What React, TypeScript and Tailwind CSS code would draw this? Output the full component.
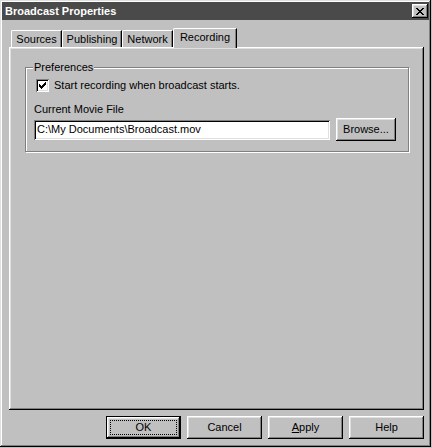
import React from "react";

const raised =
  "shadow-[inset_-1px_-1px_#000,inset_1px_1px_#fff,inset_-2px_-2px_#808080,inset_2px_2px_#dfdfdf]";
const sunken =
  "shadow-[inset_1px_1px_#808080,inset_-1px_-1px_#fff,inset_2px_2px_#000,inset_-2px_-2px_#dfdfdf]";

function Tab({ label, w, selected }: { label: string; w: number; selected?: boolean }) {
  if (selected) {
    return (
      <div
        className="relative z-10 -mx-[2px] -mb-[1px] h-[20px] w-[64px] rounded-tl-[2px] border-l border-t border-white bg-[#c0c0c0] border-r border-r-black shadow-[inset_-1px_0_#808080] flex justify-center pt-[2px]"
      >
        <span className="leading-[13px]">{label}</span>
      </div>
    );
  }
  return (
    <div
      style={{ width: w }}
      className="h-[17px] rounded-tl-[2px] border-l border-t border-white border-r border-r-black shadow-[inset_-1px_0_#808080] flex justify-center pt-[2px]"
    >
      <span className="leading-[13px]">{label}</span>
    </div>
  );
}

function Button({ children, def }: { children: React.ReactNode; def?: boolean }) {
  if (def) {
    return (
      <div className="w-[75px] h-[23px] border border-black">
        <div className={`w-full h-full ${raised} p-[3px]`}>
          <div className="w-full h-full border border-dotted border-black flex items-center justify-center leading-[13px]">
            {children}
          </div>
        </div>
      </div>
    );
  }
  return (
    <div className={`w-[75px] h-[23px] ${raised} flex items-center justify-center leading-[13px]`}>
      {children}
    </div>
  );
}

export default function App() {
  return (
    <div
      className="w-[432px] h-[448px] bg-[#c0c0c0] text-[11px] text-black"
      style={{ fontFamily: '"Liberation Sans", Arial, sans-serif' }}
    >
      <div className="w-[431px] h-[447px] p-[2px] shadow-[inset_-1px_-1px_#000,inset_1px_1px_#dfdfdf,inset_-2px_-2px_#808080,inset_2px_2px_#fff] flex flex-col">
        {/* Title bar */}
        <div className="h-[18px] bg-[#4a4a4a] flex items-center justify-between pl-[3px] pr-[1px]">
          <span className="text-white font-bold text-[11px] leading-[13px]">Broadcast Properties</span>
          <div className={`w-[16px] h-[14px] bg-[#c0c0c0] ${raised} flex items-center justify-center`}>
            <svg width="8" height="7" viewBox="0 0 8 7" shapeRendering="crispEdges">
              <path
                d="M0 0h2v1h1v1h2V1h1V0h2v1H7v1H6v1H5v1h1v1h1v1h1v1H6V6H5V5H3v1H2v1H0V6h1V5h1V4h1V3H2V2H1V1H0z"
                fill="#000"
              />
            </svg>
          </div>
        </div>

        {/* Tabs */}
        <div className="mt-[8px] ml-[9px] h-[19px] flex items-end">
          <Tab label="Sources" w={51} />
          <Tab label="Publishing" w={60} />
          <Tab label="Network" w={51} />
          <div className="w-[2px]" />
          <Tab label="Recording" w={60} selected />
        </div>

        {/* Panel */}
        <div className="ml-[7px] w-[415px] h-[363px] shadow-[inset_-1px_-1px_#000,inset_1px_1px_#fff,inset_-2px_-2px_#808080,inset_2px_2px_#dfdfdf] pt-[20px] pl-[16px]">
          <div className="relative w-[384px] h-[85px] border border-[#808080] shadow-[inset_1px_1px_#fff,1px_1px_#fff] pt-[11px] pl-[8px]">
            <span className="absolute -top-[7px] left-[7px] px-[1px] bg-[#c0c0c0] leading-[13px]">Preferences</span>
            <div className="flex items-center h-[13px] ml-[2px]">
              <div className={`w-[13px] h-[13px] bg-white ${sunken} flex items-center justify-center`}>
                <svg width="7" height="7" viewBox="0 0 7 7" shapeRendering="crispEdges">
                  <path d="M6 0h1v3H6v1H5v1H4v1H3v1H2V6H1V5H0V2h1v1h1v1h1V3h1V2h1V1h1z" fill="#000" />
                </svg>
              </div>
              <span className="ml-[5px] leading-[13px]">Start recording when broadcast starts.</span>
            </div>
            <div className="mt-[11px] h-[13px] leading-[13px]">Current Movie File</div>
            <div className="mt-[2px] h-[23px] flex items-center gap-[6px]">
              <div className={`w-[296px] h-[20px] bg-white ${sunken} flex items-center pl-[3px] leading-[13px]`}>
                C:\My Documents\Broadcast.mov
              </div>
              <div className={`w-[60px] h-[23px] ${raised} flex items-center justify-center leading-[13px]`}>
                Browse...
              </div>
            </div>
          </div>
        </div>

        {/* Buttons */}
        <div className="mt-[6px] ml-[7px] w-[415px] flex justify-end gap-[6px]">
          <Button def>OK</Button>
          <Button>Cancel</Button>
          <Button>
            <span>
              <span className="underline">A</span>pply
            </span>
          </Button>
          <Button>Help</Button>
        </div>
      </div>
    </div>
  );
}
